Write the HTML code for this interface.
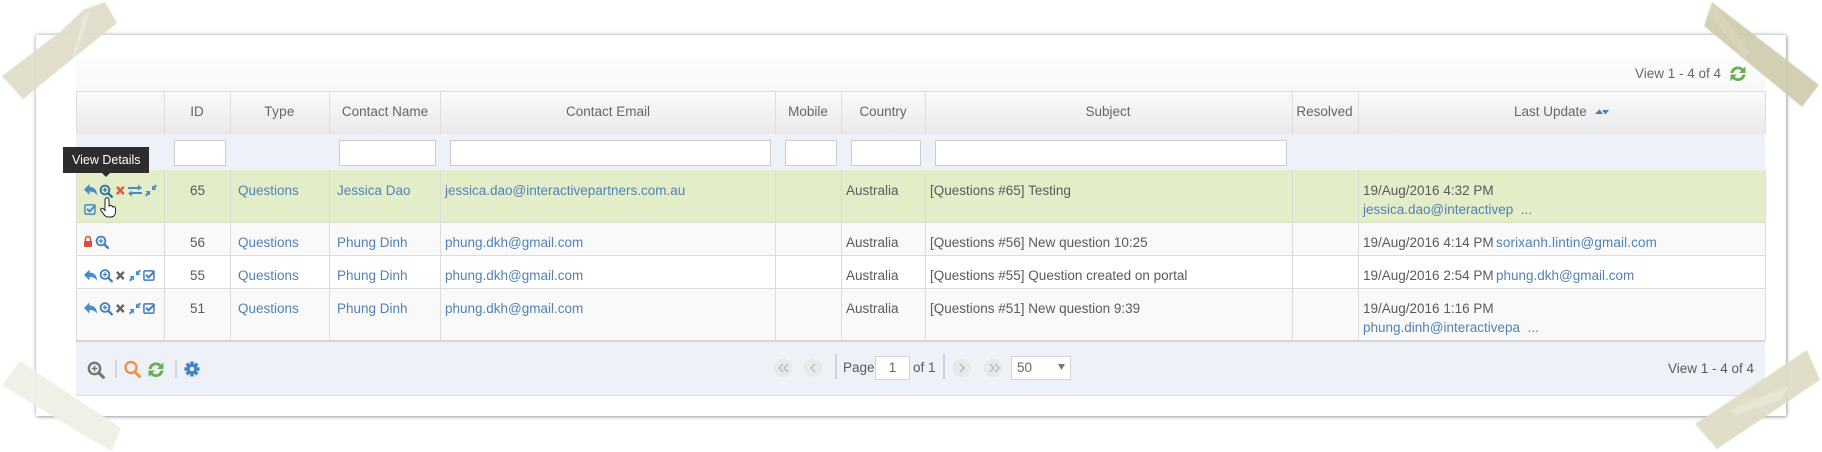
<!DOCTYPE html>
<html><head><meta charset="utf-8"><style>
html,body{margin:0;padding:0;background:#fff}
body{width:1822px;height:452px;position:relative;overflow:hidden;font-family:"Liberation Sans",sans-serif;font-size:13.5px;color:#5a5a5a}
div,a,span.t{position:absolute;white-space:nowrap}
.p{left:36px;top:35px;width:1750px;height:381px;background:#fff;box-shadow:0 0 4px rgba(0,0,0,.35),1px 1px 3px rgba(0,0,0,.2)}
.b{background:#ddd}
.v{width:1px;background:#dcdcdc}
.h{width:1px;top:91px;height:43px;background:#ddd}
.th{top:103px;line-height:18px;color:#666;text-align:center;font-size:13.5px}
.i{top:140px;height:24px;background:#fff;border:1px solid #ccc}
.t{line-height:18px}
a{color:#5282b4;line-height:18px}
svg{position:absolute;left:0;top:0}
</style></head><body>
<div class="p"></div>
<div style="left:76px;top:56px;width:1689px;height:35px;background:linear-gradient(#fcfcfc,#f7f8f9)"></div>
<div style="left:76px;top:91px;width:1689px;height:43px;background:linear-gradient(#fafafa,#e9e9e9);border-top:1px solid #ddd;box-sizing:border-box"></div>
<div style="left:76px;top:134px;width:1689px;height:36px;background:#eef2f8"></div>
<div style="left:76px;top:170px;width:1689px;height:53px;background:#e3edc8"></div>
<div style="left:76px;top:223px;width:1689px;height:32px;background:#f9f9f9"></div>
<div style="left:76px;top:255px;width:1689px;height:33px;background:#fff"></div>
<div style="left:76px;top:288px;width:1689px;height:53px;background:#f9f9f9"></div>
<div style="left:76px;top:341px;width:1689px;height:55px;background:#eef2f8;border-bottom:1px solid #ddd;box-sizing:border-box"></div>
<div class="b" style="left:76px;top:222px;width:1689px;height:1px;background:#d9e0c8"></div>
<div class="b" style="left:76px;top:255px;width:1689px;height:1px"></div>
<div class="b" style="left:76px;top:288px;width:1689px;height:1px"></div>
<div style="left:76px;top:340px;width:1689px;height:2px;background:#d5d5d5"></div>
<div class="b" style="left:76px;top:91px;width:1px;height:43px"></div>
<div class="b" style="left:1765px;top:91px;width:1px;height:43px"></div>
<div class="b" style="left:76px;top:170px;width:1px;height:171px"></div>
<div class="b" style="left:1765px;top:170px;width:1px;height:171px"></div>

<div class="h" style="left:164px"></div><div class="h" style="left:230px"></div><div class="h" style="left:329px"></div><div class="h" style="left:440px"></div><div class="h" style="left:775px"></div><div class="h" style="left:841px"></div><div class="h" style="left:925px"></div><div class="h" style="left:1292px"></div><div class="h" style="left:1358px"></div>
<div class="v" style="left:164px;top:170px;height:171px"></div><div class="v" style="left:230px;top:170px;height:171px"></div><div class="v" style="left:329px;top:170px;height:171px"></div><div class="v" style="left:440px;top:170px;height:171px"></div><div class="v" style="left:775px;top:170px;height:171px"></div><div class="v" style="left:841px;top:170px;height:171px"></div><div class="v" style="left:925px;top:170px;height:171px"></div><div class="v" style="left:1292px;top:170px;height:171px"></div><div class="v" style="left:1358px;top:170px;height:171px"></div>

<div class="th" style="left:164px;width:66px">ID</div>
<div class="th" style="left:230px;width:99px;letter-spacing:.3px">Type</div>
<div class="th" style="left:329px;width:112px">Contact Name</div>
<div class="th" style="left:441px;width:334px">Contact Email</div>
<div class="th" style="left:775px;width:66px">Mobile</div>
<div class="th" style="left:841px;width:84px">Country</div>
<div class="th" style="left:925px;width:366px">Subject</div>
<div class="th" style="left:1291px;width:67px">Resolved</div>
<div class="th" style="left:1514px;">Last Update</div>

<div class="i" style="left:174px;width:50px"></div>
<div class="i" style="left:339px;width:95px"></div>
<div class="i" style="left:450px;width:319px"></div>
<div class="i" style="left:785px;width:50px"></div>
<div class="i" style="left:851px;width:68px"></div>
<div class="i" style="left:935px;width:350px"></div>

<span class="t" style="left:1635px;top:65px;color:#666">View 1 - 4 of 4</span>

<span class="t" style="left:190px;top:182px">65</span><a style="left:238px;top:182px">Questions</a><a style="left:337px;top:182px">Jessica Dao</a><a style="left:445px;top:182px">jessica.dao@interactivepartners.com.au</a><span class="t" style="left:846px;top:182px">Australia</span><span class="t" style="left:930px;top:182px">[Questions #65] Testing</span><span class="t" style="left:1363px;top:182px">19/Aug/2016 4:32 PM</span><a style="left:1363px;top:201px">jessica.dao@interactivep &nbsp;...</a>

<span class="t" style="left:190px;top:234px">56</span><a style="left:238px;top:234px">Questions</a><a style="left:337px;top:234px">Phung Dinh</a><a style="left:445px;top:234px">phung.dkh@gmail.com</a><span class="t" style="left:846px;top:234px">Australia</span><span class="t" style="left:930px;top:234px">[Questions #56] New question 10:25</span><span class="t" style="left:1363px;top:234px">19/Aug/2016 4:14 PM</span><a style="left:1496px;top:234px;letter-spacing:.13px">sorixanh.lintin@gmail.com</a>

<span class="t" style="left:190px;top:267px">55</span><a style="left:238px;top:267px">Questions</a><a style="left:337px;top:267px">Phung Dinh</a><a style="left:445px;top:267px">phung.dkh@gmail.com</a><span class="t" style="left:846px;top:267px">Australia</span><span class="t" style="left:930px;top:267px">[Questions #55] Question created on portal</span><span class="t" style="left:1363px;top:267px">19/Aug/2016 2:54 PM</span><a style="left:1496px;top:267px">phung.dkh@gmail.com</a>

<span class="t" style="left:190px;top:300px">51</span><a style="left:238px;top:300px">Questions</a><a style="left:337px;top:300px">Phung Dinh</a><a style="left:445px;top:300px">phung.dkh@gmail.com</a><span class="t" style="left:846px;top:300px">Australia</span><span class="t" style="left:930px;top:300px">[Questions #51] New question 9:39</span><span class="t" style="left:1363px;top:300px">19/Aug/2016 1:16 PM</span><a style="left:1363px;top:319px">phung.dinh@interactivepa &nbsp;...</a>

<span class="t" style="left:843px;top:359px">Page</span>
<div style="left:875px;top:356px;width:33px;height:22px;background:#fff;border:1px solid #d5d5d5;text-align:center;line-height:22px;color:#666">1</div>
<span class="t" style="left:913px;top:359px">of 1</span>
<div style="left:1011px;top:356px;width:58px;height:22px;background:#fff;border:1px solid #d5d5d5;line-height:22px;color:#666"><span class="t" style="left:5px;top:2px">50</span></div>
<span class="t" style="left:1668px;top:360px">View 1 - 4 of 4</span>

<svg width="1822" height="452" viewBox="0 0 1822 452">
<defs>
<filter id="soft"><feGaussianBlur stdDeviation=".5"/></filter>
<g id="reply"><path d="M0 5.5 L5.5 0 V3 C10 3 13 5.500 13 11.500 C11.500 8.500 9 7.500 5.500 7.500 V11 Z"/></g>
<g id="zoom"><circle cx="5" cy="5" r="4.400" fill="none" stroke-width="1.800"/><path d="M8.200 8.200 L11.800 11.800" stroke-width="2.400" stroke-linecap="round" fill="none"/><path d="M2.800 5H7.200M5 2.800V7.200" stroke-width="1.200" fill="none"/></g>
<g id="x"><path d="M0 1.800 L1.800 0 L4.300 2.700 L6.800 0 L8.600 1.800 L6 4.500 L8.600 7.200 L6.800 9 L4.300 6.300 L1.800 9 L0 7.200 L2.600 4.500 Z"/></g>
<g id="rt"><path d="M0 2.500H10V0L14 3.500L10 6V4.500H0ZM14 7.500H4V6L0 9L4 12V9.500H14Z"/></g>
<g id="cmp"><path d="M7 1L7 5.500L11.500 5.500L9.800 3.800L12 1.500L10.500 0L8.300 2.300ZM5 11L5 6.500L.5 6.500L2.200 8.200L0 10.500L1.500 12L3.700 9.700Z"/></g>
<g id="chk"><rect x=".9" y=".9" width="10" height="9.200" rx="1.200" fill="none" stroke-width="1.500"/><path d="M3 4.800L5.600 7.300L11.600 1.200" fill="none" stroke-width="2"/></g>
<g id="ref"><path d="M0.500 7C1 2.500 4.500 0.500 8 0.500C10.300 0.500 12 1.300 13.200 2.600L15.500 0.500V7H9L11.300 4.800C10.500 3.900 9.300 3.300 8 3.300C5.800 3.300 4.200 4.700 3.600 7Z M15.500 8.500C15 13 11.500 15 8 15C5.700 15 4 14.200 2.800 12.900L0.500 15V8.500H7L4.700 10.700C5.500 11.600 6.700 12.200 8 12.200C10.200 12.200 11.800 10.800 12.400 8.500Z"/></g>
</defs>

<g fill="#4a8cc9"><use href="#reply" x="84" y="184"/></g>
<g fill="#1f6f9a" stroke="#2b7099"><use href="#zoom" x="100" y="185"/></g>
<g fill="#e2573c"><use href="#x" x="116" y="186"/></g>
<g fill="#4a8cc9"><use href="#rt" x="128" y="184.500"/><use href="#cmp" x="145" y="184.500"/></g>
<g fill="none" stroke="#4a8cc9"><use href="#chk" x="84" y="204"/></g>

<path d="M85.500 241V239.500C85.500 235.500 90.500 235.500 90.500 239.500V241" fill="none" stroke="#dd4b39" stroke-width="1.500"/><rect x="84" y="241" width="8" height="6" rx="1" fill="#dd4b39"/>
<g fill="#3f7fc0" stroke="#3f7fc0"><use href="#zoom" x="96" y="236"/></g>

<g fill="#4a8cc9"><use href="#reply" x="84" y="269.500"/><use href="#cmp" x="129" y="269.500"/></g>
<g fill="#3f7fc0" stroke="#3f7fc0"><use href="#zoom" x="100" y="269.500"/></g>
<g fill="#666"><use href="#x" x="116" y="271"/></g>
<g stroke="#3f7fc0"><use href="#chk" x="143" y="270"/></g>

<g fill="#4a8cc9"><use href="#reply" x="84" y="302.500"/><use href="#cmp" x="129" y="302.500"/></g>
<g fill="#3f7fc0" stroke="#3f7fc0"><use href="#zoom" x="100" y="302.500"/></g>
<g fill="#666"><use href="#x" x="116" y="304"/></g>
<g stroke="#3f7fc0"><use href="#chk" x="143" y="303"/></g>

<!-- cursor -->
<path d="M105 200C105 197 109 197 109 200V206C110 205 112 205 112.500 207C114 206 115.500 207 115.500 208.500V212C115.500 215 113.500 217 111 217H108C105 217 103.500 214 101 210.500C100 208.500 102 207.500 103.500 209L105 210.500Z" fill="#fff" stroke="#222" stroke-width="1"/>

<!-- footer icons -->
<g fill="#777" stroke="#777" transform="translate(88 362) scale(1.300)"><use href="#zoom"/></g>
<rect x="115" y="360" width="2" height="18" fill="#cfd6e0"/>
<circle cx="131" cy="367.500" r="5.500" fill="none" stroke="#ee9247" stroke-width="2.400"/><path d="M135 372L139.500 376.500" stroke="#ee9247" stroke-width="3" stroke-linecap="round"/>
<g fill="#6cae57"><use href="#ref" x="148" y="362"/><use href="#ref" x="1730" y="66"/></g>
<rect x="175" y="360" width="2" height="18" fill="#cfd6e0"/>
<g transform="translate(192 369)"><path d="M-1.700 -7.500H1.700V7.500H-1.700ZM-7.500 -1.700H7.500V1.700H-7.500ZM-6.500 -4.100L-4.100 -6.500L6.500 4.100L4.100 6.500ZM6.500 -4.100L4.100 -6.500L-6.500 4.100L-4.100 6.500Z" fill="#3f7fc0"/><circle r="4.500" fill="#3f7fc0"/><circle r="2.300" fill="#eef2f8"/></g>

<!-- sort -->
<path d="M1595 114L1599.500 109.500L1603 114Z" fill="#3f7fc0"/><path d="M1602 110H1609L1605.500 114.500Z" fill="#3f7fc0"/>

<!-- pager -->
<g fill="#e8e9ec" stroke="#f5f5f5"><circle cx="783" cy="368" r="10"/><circle cx="813" cy="368" r="10"/><circle cx="962" cy="368" r="10"/><circle cx="993" cy="368" r="10"/></g>
<g fill="none" stroke="#b5bac2" stroke-width="1.500"><path d="M783 364L779 368L783 372M788 364L784 368L788 372M815 364L811 368L815 372M960 364L964 368L960 372M990 364L994 368L990 372M995 364L999 368L995 372"/></g>
<rect x="835" y="354" width="2" height="25" fill="#c9d2de"/><rect x="943" y="354" width="2" height="25" fill="#c9d2de"/>
<path d="M1058 364H1065L1061.500 370Z" fill="#777"/>

<!-- tooltip -->
<rect x="63" y="147" width="86" height="26" fill="#2d2d2d"/><path d="M102 173H110L106 177Z" fill="#2d2d2d"/>

<!-- tapes -->
<g filter="url(#soft)">
<path d="M2 76L23 99L117 23L105 2L83 10L60 32Z" fill="#e0dcc8" opacity=".93"/>
<path d="M72 60L84 14L90 12L78 50Z" fill="#efece0" opacity=".6"/>
<path d="M1712 2L1704 26L1802 107L1819 85Z" fill="#cfcbac" opacity=".93"/>
<path d="M1712 2L1708 14L1745 58L1750 52Z" fill="#dcd9c2" opacity=".6"/>
<path d="M2 385L20 361L121 428L112 451L95 442Z" fill="#f0efe6" opacity=".95"/>
<path d="M1695 424L1717 449L1820 380L1807 350Z" fill="#dedbc5" opacity=".93"/>
<path d="M1730 410L1790 385L1780 400L1735 415Z" fill="#efedde" opacity=".6"/>
</g>
</svg>
<div style="left:72px;top:151px;line-height:18px;color:#fff;font-size:12.500px">View Details</div>
</body></html>
